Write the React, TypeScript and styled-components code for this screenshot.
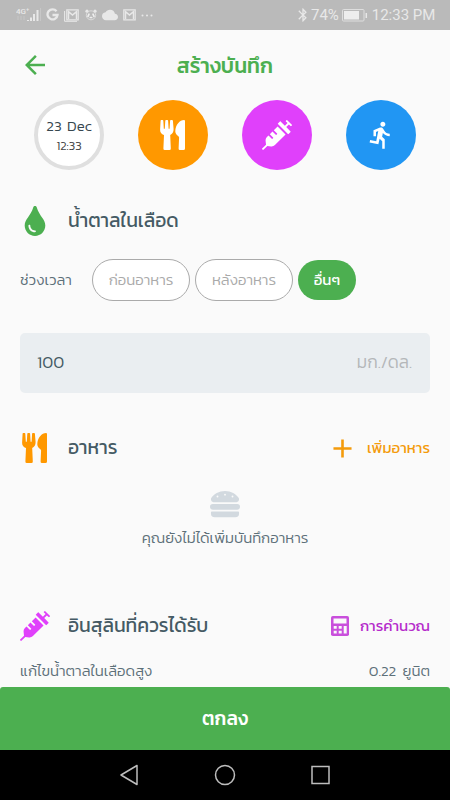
import React from "react";
import styled, { createGlobalStyle } from "styled-components";
import { FaSyringe, FaTint, FaHamburger } from "react-icons/fa";
import { MdArrowBack, MdDirectionsRun, MdCloud, MdBluetooth, MdAdd } from "react-icons/md";

const GlobalStyle = createGlobalStyle`
  * { box-sizing: border-box; }
  body { margin: 0; background: #fafafa; font-family: "Kanit", "Prompt", "Noto Sans Thai", "Noto Sans", sans-serif; }
`;

const Screen = styled.div`
  width: 450px;
  height: 800px;
  display: flex;
  flex-direction: column;
  overflow: hidden;
  background: #fafafa;
`;

const StatusBar = styled.header`
  height: 30px;
  flex: none;
  display: flex;
  align-items: center;
  justify-content: space-between;
  padding: 0 15px 0 16px;
  background: #bababa;
  color: #e8e8e8;
`;

const StatusGroup = styled.div<{ $gap: number }>`
  display: flex;
  align-items: center;
  gap: ${(p) => p.$gap}px;
  svg { display: block; flex: none; }
`;

const StatusText = styled.span<{ $width: number }>`
  width: ${(p) => p.$width}px;
  font: 400 15px/30px Roboto, sans-serif;
  white-space: nowrap;
`;

const Content = styled.main`
  height: 657px;
  flex: none;
  overflow: hidden;
  padding: 0 20px;
`;

const TitleBar = styled.div`
  height: 70px;
  display: grid;
  grid-template-columns: 30px 1fr 30px;
  align-items: center;
  color: #4caf50;
  text-align: center;
`;

const Title = styled.h1`
  margin: 0;
  padding-top: 2px;
  font-size: 21px;
  line-height: 24px;
  font-weight: 500;
`;

const Label = styled.span<{ $size: number; $color?: string; $weight?: number }>`
  font-size: ${(p) => p.$size}px;
  line-height: 24px;
  font-weight: ${(p) => p.$weight ?? 300};
  color: ${(p) => p.$color ?? "inherit"};
  word-spacing: 3px;
  white-space: nowrap;
`;

const Shortcuts = styled.div`
  height: 70px;
  display: flex;
  justify-content: space-between;
  padding: 0 14px;
`;

const Circle = styled.div<{ $fill: string; $ring?: boolean }>`
  width: 70px;
  height: 70px;
  padding: ${(p) => (p.$ring ? "2px 0 0" : "0 1px 0 0")};
  border-radius: 50%;
  background: ${(p) => p.$fill};
  border: ${(p) => (p.$ring ? "4px solid #dfdfdf" : "0")};
  color: #fff;
  display: flex;
  flex-direction: column;
  align-items: center;
  justify-content: center;
`;

const DateText = styled.span<{ $size: number; $color: string }>`
  font-size: ${(p) => p.$size}px;
  line-height: 20px;
  font-weight: 300;
  word-spacing: 2px;
  color: ${(p) => p.$color};
  white-space: nowrap;
`;

const Section = styled.section<{ $top: number }>`
  margin-top: ${(p) => p.$top}px;
`;

const SectionHead = styled.div`
  height: 34px;
  display: flex;
  align-items: center;
`;

const IconSlot = styled.div`
  width: 29px;
  margin-right: 19px;
  display: flex;
  justify-content: center;
  svg { flex: none; }
`;

const Action = styled.div<{ $gap: number; $color: string }>`
  margin-left: auto;
  display: flex;
  align-items: center;
  gap: ${(p) => p.$gap}px;
  color: ${(p) => p.$color};
`;

const PeriodRow = styled.div`
  display: flex;
  align-items: center;
  height: 42px;
  margin-top: 21px;
`;

const PeriodName = styled.div`
  width: 72px;
  display: flex;
`;

const Pill = styled.div<{ $active?: boolean }>`
  width: ${(p) => (p.$active ? 58 : 98)}px;
  height: ${(p) => (p.$active ? 40 : 42)}px;
  margin-right: ${(p) => (p.$active ? 0 : 5)}px;
  border-radius: 21px;
  border: ${(p) => (p.$active ? "0" : "1px solid #aaa")};
  background: ${(p) => (p.$active ? "#4caf50" : "#fff")};
  color: ${(p) => (p.$active ? "#fff" : "#aaa")};
  display: flex;
  align-items: center;
  justify-content: center;
`;

const ValueField = styled.div`
  height: 60px;
  margin-top: 32px;
  padding: 0 18px 2px 17px;
  border-radius: 5px;
  background: #eaeef1;
  display: flex;
  align-items: center;
  justify-content: space-between;
`;

const EmptyState = styled.div`
  margin-top: 24px;
  display: flex;
  flex-direction: column;
  align-items: center;
  gap: 7px;
`;

const DoseRow = styled.div`
  margin-top: 16px;
  display: flex;
  justify-content: space-between;
`;

const Submit = styled.div`
  height: 63px;
  flex: none;
  padding-top: 1px;
  display: flex;
  align-items: center;
  justify-content: center;
  background: #4caf50;
  color: #fff;
  border-radius: 3px 3px 0 0;
`;

const NavBar = styled.nav`
  height: 50px;
  flex: none;
  display: flex;
  justify-content: space-between;
  align-items: center;
  padding: 0 119px 0 119px;
  background: #000;
`;

const SLATE = "#455a64";
const MUTED = "#5d7079";

const Cutlery = ({ color }: { color: string }) => (
  <svg width="25" height="30" viewBox="0 0 25 30" fill={color}>
    <path d="M1.2 0h1.4q.7 0 .7.8l.5 8h1L5.3.8Q5.4 0 6 0h1.400q.6 0 .7.8l.5 8h1l.5-8Q10.200 0 10.800 0h1.300q.7 0 .8.800l.7 8.200c.1 3-1.200 5-3.400 5.900l.6 13.600q.1 1.500-1.400 1.500H4.800q-1.500 0-1.400-1.500L4 14.900C1.400 14 0 12.200.1 9.400L.6.800Q.6 0 1.200 0Z" />
    <path d="M25 1v27.500q0 1.500-1.500 1.500H20q-1.500 0-1.400-1.500l.5-11c0-1.600-3.800-2.400-3.800-6.200C15.300 4.800 20 0 24 0q1 0 1 1Z" />
  </svg>
);

const SignalIcon = () => (
  <svg width="25" height="16" viewBox="0 0 25 16" fill="#e8e8e8">
    <text x="0" y="7" fontFamily="Roboto" fontSize="8" fontWeight="500">4G⁺</text>
    <path d="M11 13h2v1h-2zM14 10.500h2V14h-2zM17 7h2v7h-2zM20.500 3h2v11h-2z" />
    <path d="M2 9v4M5 9v4M8 9v4M24.500 1v13" stroke="#cacaca" strokeWidth=".8" />
  </svg>
);

const GoogleIcon = () => (
  <svg width="13" height="14" viewBox="0 0 13 14" fill="none" stroke="#e8e8e8" strokeWidth="2.300">
    <path d="M10.500 3.300A5 5 0 1 0 11.500 7H6.500" />
  </svg>
);

const MailIcon = ({ stacked }: { stacked?: boolean }) => (
  <svg width={stacked ? 15 : 13} height={stacked ? 14 : 12} viewBox={stacked ? "-2 -1 15 14" : "0 0 13 12"} fill="none" stroke="#e8e8e8">
    <path d="M.8.800h11.400v10H.8z" strokeWidth="1.200" />
    <path d="M2.500 10V2.600L6.500 6l4-3.400V10" strokeWidth="1.500" />
    {stacked && <path d="M-1.400 2v10.300H11" strokeWidth="1" />}
  </svg>
);

const PandaIcon = () => (
  <svg width="12" height="12" viewBox="0 0 12 12">
    <circle cx="2" cy="2.200" r="1.600" fill="#e8e8e8" />
    <circle cx="10" cy="2.200" r="1.600" fill="#e8e8e8" />
    <ellipse cx="6" cy="6.300" rx="4.700" ry="4.500" fill="none" stroke="#dedede" strokeWidth=".9" />
    <path d="M4 5.200 3 7.300M8 5.200l1 2.100M5.300 8.500h1.400" stroke="#eee" strokeWidth="1.700" strokeLinecap="round" />
  </svg>
);

const BatteryIcon = () => (
  <svg width="26" height="13" viewBox="0 0 26 13">
    <rect x=".5" y=".5" width="21.500" height="11.500" rx="1" fill="none" stroke="#dedede" />
    <path d="M2 2h15v8.500H2z" fill="#ededed" />
    <path d="M24.300 4v5" stroke="#e8e8e8" strokeWidth="1.500" />
  </svg>
);

const CalculatorIcon = () => (
  <svg width="18" height="20" viewBox="0 0 18 20">
    <rect width="18" height="20" rx="1.800" fill="#c94fdc" />
    <path d="M2.500 2.500h13v5h-13zM2.700 10h3v2.800h-3zM7.700 10h3v2.800h-3zM12.700 10h3v7.500h-3zM2.700 14.700h3v2.800h-3zM7.700 14.700h3v2.800h-3z" fill="#fafafa" />
  </svg>
);

export default function App() {
  return (
    <Screen>
      <GlobalStyle />
      <StatusBar>
        <StatusGroup $gap={5.2}>
          <SignalIcon />
          <GoogleIcon />
          <MailIcon stacked />
          <PandaIcon />
          <MdCloud size={16} />
          <MailIcon />
          <svg width="12" height="3" viewBox="0 0 12 3" fill="#e8e8e8">
            <circle cx="1.500" cy="1.500" r="1" />
            <circle cx="6" cy="1.500" r="1" />
            <circle cx="10.500" cy="1.500" r="1" />
          </svg>
        </StatusGroup>
        <StatusGroup $gap={0}>
          <MdBluetooth size={16} />
          <StatusText $width={31}>74%</StatusText>
          <BatteryIcon />
          <StatusText $width={67}>&nbsp;12:33 PM</StatusText>
        </StatusGroup>
      </StatusBar>

      <Content>
        <TitleBar>
          <MdArrowBack size={30} />
          <Title>สร้างบันทึก</Title>
        </TitleBar>

        <Shortcuts>
          <Circle $fill="#fff" $ring>
            <DateText $size={15} $color="#37474f">23 Dec</DateText>
            <DateText $size={12.5} $color="#444">12:33</DateText>
          </Circle>
          <Circle $fill="#ff9800"><Cutlery color="#fff" /></Circle>
          <Circle $fill="#e040fb"><FaSyringe size={30} /></Circle>
          <Circle $fill="#2196f3"><MdDirectionsRun size={30} /></Circle>
        </Shortcuts>

        <Section $top={34}>
          <SectionHead>
            <IconSlot><FaTint size={30} color="#4caf50" /></IconSlot>
            <Label $size={19.3} $color={SLATE} $weight={400}>น้ำตาลในเลือด</Label>
          </SectionHead>
          <PeriodRow>
            <PeriodName><Label $size={15} $color={MUTED}>ช่วงเวลา</Label></PeriodName>
            <Pill><Label $size={15}>ก่อนอาหาร</Label></Pill>
            <Pill><Label $size={15}>หลังอาหาร</Label></Pill>
            <Pill $active><Label $size={15} $weight={400}>อื่นๆ</Label></Pill>
          </PeriodRow>
          <ValueField>
            <Label $size={17} $color={SLATE}>100</Label>
            <Label $size={17.3} $color="#b4b7b9">มก./ดล.</Label>
          </ValueField>
        </Section>

        <Section $top={38}>
          <SectionHead>
            <IconSlot><Cutlery color="#ff9800" /></IconSlot>
            <Label $size={19.3} $color={SLATE} $weight={400}>อาหาร</Label>
            <Action $gap={9} $color="#f49b0b">
              <MdAdd size={31} />
              <Label $size={15} $weight={400}>เพิ่มอาหาร</Label>
            </Action>
          </SectionHead>
          <EmptyState>
            <FaHamburger size={30} color="#d2d9df" />
            <Label $size={15} $color={MUTED}>คุณยังไม่ได้เพิ่มบันทึกอาหาร</Label>
          </EmptyState>
        </Section>

        <Section $top={59}>
          <SectionHead>
            <IconSlot><FaSyringe size={30} color="#e040fb" /></IconSlot>
            <Label $size={19.3} $color={SLATE} $weight={400}>อินสุลินที่ควรได้รับ</Label>
            <Action $gap={11} $color="#b52bcb">
              <CalculatorIcon />
              <Label $size={15} $weight={400}>การคำนวณ</Label>
            </Action>
          </SectionHead>
          <DoseRow>
            <Label $size={15} $color={MUTED}>แก้ไขน้ำตาลในเลือดสูง</Label>
            <Label $size={15} $color={MUTED}>0.22 ยูนิต</Label>
          </DoseRow>
        </Section>
      </Content>

      <Submit><Label $size={19} $weight={500}>ตกลง</Label></Submit>

      <NavBar>
        <svg width="20" height="22" viewBox="0 0 20 22" fill="none" stroke="#bdbdbd" strokeWidth="1.500" strokeLinejoin="round">
          <path d="M18 1.500v19L2 11Z" />
        </svg>
        <svg width="22" height="22" viewBox="0 0 22 22" fill="none" stroke="#bdbdbd" strokeWidth="1.500">
          <circle cx="11" cy="11" r="9.500" />
        </svg>
        <svg width="20" height="20" viewBox="0 0 20 20" fill="none" stroke="#bdbdbd" strokeWidth="1.500">
          <rect x="1" y="1.500" width="17" height="17" />
        </svg>
      </NavBar>
    </Screen>
  );
}
